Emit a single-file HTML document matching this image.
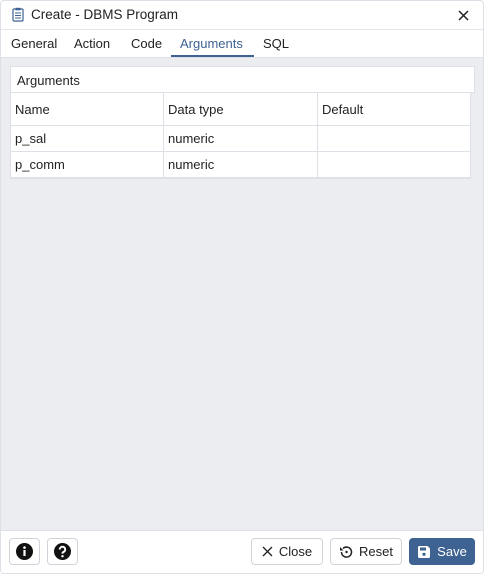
<!DOCTYPE html><html><head><style>
*{box-sizing:border-box;margin:0;padding:0}
body{width:485px;height:575px;background:#fff;font-family:"Liberation Sans",sans-serif;font-size:13px;color:#222;position:relative;overflow:hidden}
.dlg{position:absolute;left:0;top:0;width:484px;height:574px;border:1px solid #dde0e6;border-radius:4px;background:#fff;overflow:hidden}
.title{position:absolute;left:0;top:0;width:100%;height:28px;font-size:13.5px}
.tabs{position:absolute;top:28px;left:0;width:100%;height:29px;border-top:1px solid #e4e6ea;border-bottom:1px solid #dde0e6}
.tab{position:absolute;top:6px;font-size:13px;color:#222}
.body{position:absolute;top:57px;left:0;width:100%;height:472px;background:#ebedf1}
.panel{position:absolute;left:9px;top:8px;width:465px;height:113px;background:#fff;border:1px solid #dde0e6}
.cell{position:absolute;border-right:1px solid #dde0e6;border-bottom:1px solid #dde0e6;padding-left:4px;display:flex;align-items:center}
.foot{position:absolute;top:529px;left:0;width:100%;height:44px;border-top:1px solid #dde0e6;background:#fff}
.btn{position:absolute;top:7px;height:27px;border:1px solid #d0d4da;border-radius:4px;background:#fff;display:flex;align-items:center;justify-content:center;gap:6px;font-size:13px;color:#222}
</style></head><body><div class="dlg">
<div class="title">
<svg style="position:absolute;left:11px;top:6px" width="12" height="15" viewBox="0 0 12 15"><rect x="1" y="2" width="10" height="12" rx="1" fill="none" stroke="#3e6291" stroke-width="1.2"/><rect x="3.5" y="0.8" width="5" height="2.5" fill="#3e6291"/><path d="M3 6h6M3 8.5h6M3 11h6" stroke="#3e6291" stroke-width="1"/></svg>
<span style="position:absolute;left:30px;top:6px">Create - DBMS Program</span>
<svg style="position:absolute;left:457px;top:9px" width="11" height="11" viewBox="0 0 11 11"><path d="M1 1L10 10M10 1L1 10" stroke="#222" stroke-width="1.5"/></svg>
</div>
<div class="tabs">
<span class="tab" style="left:10px">General</span>
<span class="tab" style="left:73px">Action</span>
<span class="tab" style="left:130px">Code</span>
<span class="tab" style="left:179px;color:#3e6291">Arguments</span>
<span class="tab" style="left:262px">SQL</span>
<div style="position:absolute;left:170px;top:25px;width:83px;height:2px;background:#3e6291"></div>
</div>
<div class="body"><div class="panel">
<div style="position:absolute;left:6px;top:6px">Arguments</div>
<div style="position:absolute;left:0;top:25px;width:463px;border-top:1px solid #dde0e6"></div>
<div class="cell" style="left:0;top:26px;width:153px;height:33px">Name</div>
<div class="cell" style="left:153px;top:26px;width:154px;height:33px">Data type</div>
<div class="cell" style="left:307px;top:26px;width:153px;height:33px">Default</div>
<div class="cell" style="left:0;top:59px;width:153px;height:26px">p_sal</div>
<div class="cell" style="left:153px;top:59px;width:154px;height:26px">numeric</div>
<div class="cell" style="left:307px;top:59px;width:153px;height:26px"></div>
<div class="cell" style="left:0;top:85px;width:153px;height:26px">p_comm</div>
<div class="cell" style="left:153px;top:85px;width:154px;height:26px">numeric</div>
<div class="cell" style="left:307px;top:85px;width:153px;height:26px"></div>
<div style="position:absolute;left:460px;top:26px;width:4px;height:86px;background:#ebedf1"></div>
</div></div>
<div class="foot">
<div class="btn" style="left:8px;width:31px"><svg width="17" height="17" viewBox="0 0 17 17"><circle cx="8.5" cy="8.5" r="8.5" fill="#111"/><rect x="7.4" y="7" width="2.2" height="6" fill="#fff"/><circle cx="8.5" cy="4.6" r="1.3" fill="#fff"/></svg></div>
<div class="btn" style="left:46px;width:31px"><svg width="17" height="17" viewBox="0 0 17 17"><circle cx="8.5" cy="8.5" r="8.5" fill="#111"/><path d="M5.8 6.5a2.7 2.7 0 1 1 3.8 2.4c-.8.4-1.1.9-1.1 1.7" fill="none" stroke="#fff" stroke-width="2"/><circle cx="8.5" cy="13.2" r="1.2" fill="#fff"/></svg></div>
<div class="btn" style="left:250px;width:72px"><svg width="11" height="11" viewBox="0 0 11 11"><path d="M1 1L10 10M10 1L1 10" stroke="#222" stroke-width="1.3"/></svg>Close</div>
<div class="btn" style="left:329px;width:72px"><svg width="14" height="14" viewBox="0 0 14 14"><path d="M2.5 7a5 5 0 1 0 1.5-3.5" fill="none" stroke="#222" stroke-width="1.5"/><path d="M1 2v3.5h3.5z" fill="#222"/><circle cx="7.5" cy="7" r="1.2" fill="#222"/></svg>Reset</div>
<div class="btn" style="left:408px;width:66px;background:#3e6291;border-color:#3e6291;color:#fff"><svg width="14" height="14" viewBox="0 0 14 14"><path d="M1 2.5A1.5 1.5 0 0 1 2.5 1h8L13 3.5v8A1.5 1.5 0 0 1 11.5 13h-9A1.5 1.5 0 0 1 1 11.5z" fill="#fff"/><rect x="3" y="2.5" width="6" height="3" fill="#3e6291"/><circle cx="7" cy="9.3" r="1.6" fill="#3e6291"/></svg>Save</div>
</div>
</div></body></html>
